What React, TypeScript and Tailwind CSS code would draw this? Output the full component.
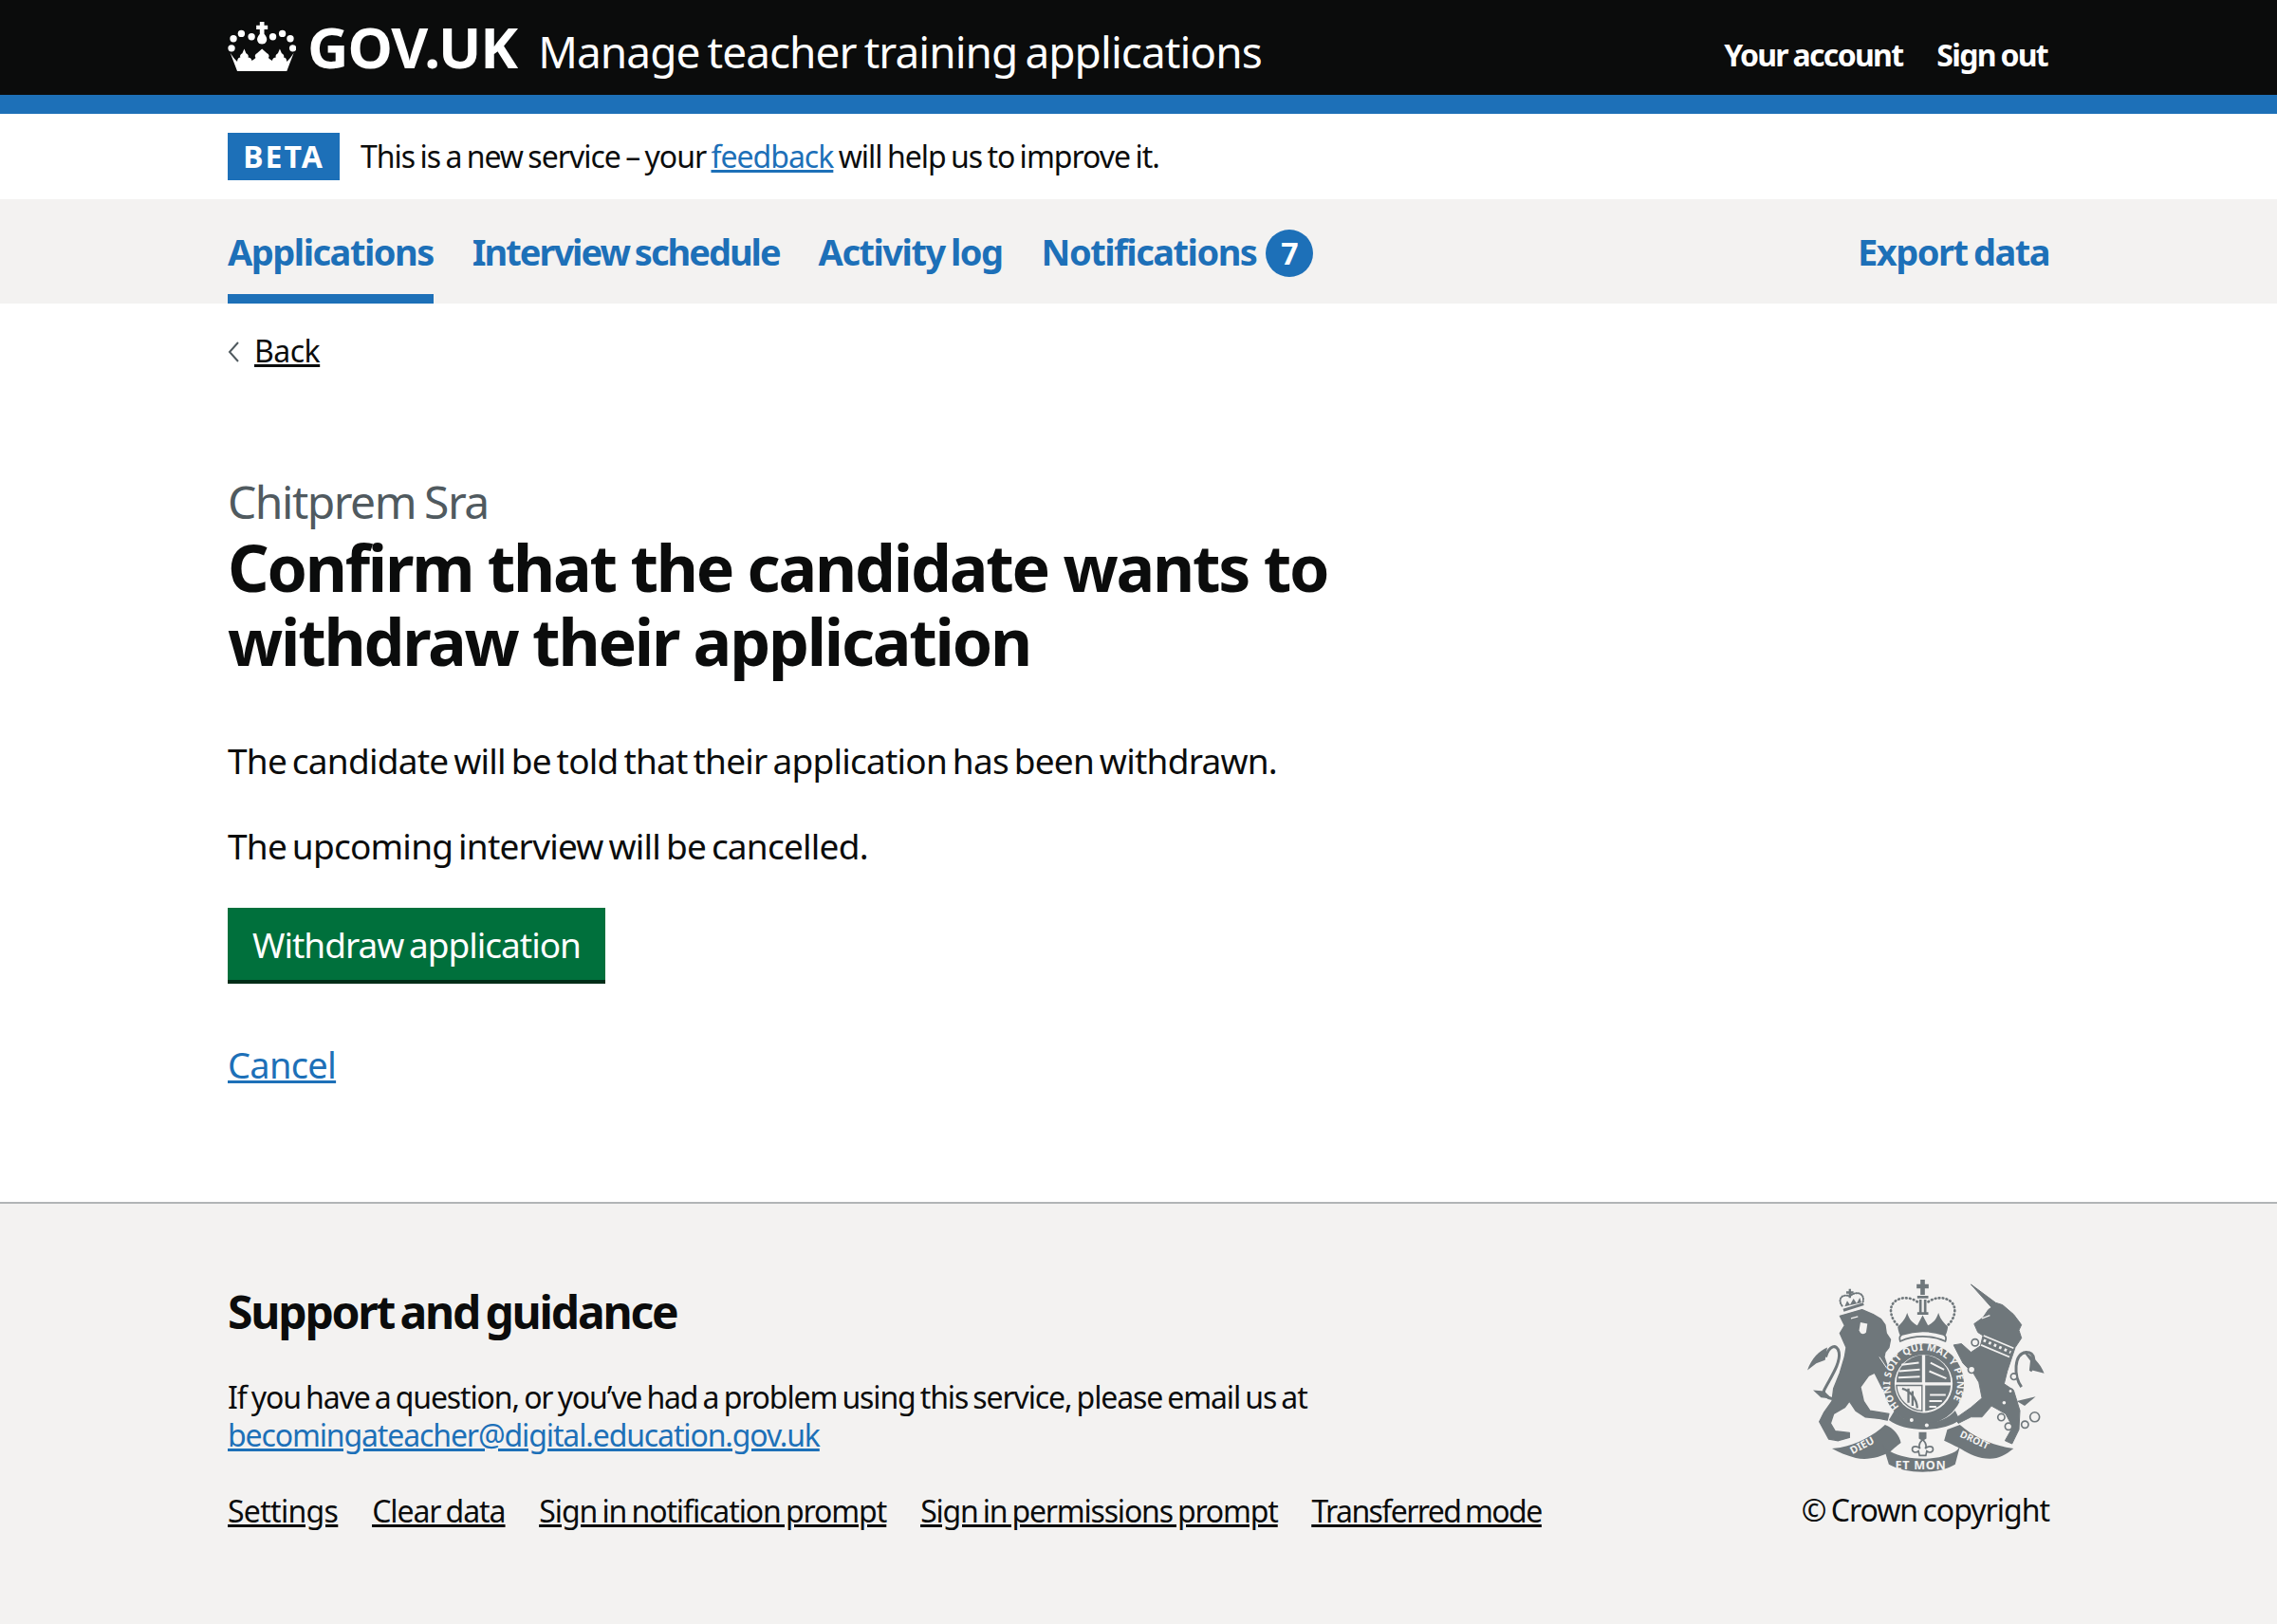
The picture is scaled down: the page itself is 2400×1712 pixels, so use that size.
import React from 'react';

const CrownLogo = () => (
  <svg viewBox="60 65 215 155" className="w-[72px] h-[52px] shrink-0" fill="#fff">
    {[[72, 148], [78, 118], [103, 102], [135, 112], [202, 112], [232, 102], [257, 118], [265, 148]].map(([cx, cy]) => (
      <circle key={`${cx}-${cy}`} cx={cx} cy={cy} r="11" />
    ))}
    <path d="M161 65h14v11h11v13h-11v14c8 10 10 16 7 23-3 7-8 9-14 9s-11-2-14-9c-3-7-1-13 7-23V89h-11V76h11z" />
    <path d="M68 163c8 12 14 20 22 27 0-9 5-13 10-13-3-6 1-11 6-13l6-14 6 14c5 2 9 7 6 13 6 0 10 3 12 10 5-3 9-6 12-9-4-5-2-11 4-14l16-14 16 14c6 3 8 9 4 14 3 3 7 6 12 9 2-7 6-10 12-10-3-6 1-11 6-13l6-14 6 14c5 2 9 7 6 13 5 0 10 4 10 13 8-7 14-15 22-27l-22 57H90z" />
  </svg>
);

const gray = '#6f777b';
const bg = '#f3f2f1';

const Crest = () => (
  <svg viewBox="70 55 755 610" className="w-[252px] h-[203px]" fill={gray}>
    {/* lion */}
    <path stroke={gray} strokeWidth="4" strokeLinejoin="round" d="M175 170L245 150L280 165L305 180L318 198L322 225L335 245L330 270L318 285L315 300L340 375L335 405L310 400L285 350L265 360L240 395L250 440L270 470L330 480L325 500L300 495L255 490L225 470L205 440L190 460L155 480L145 510L160 535L205 540L205 555L170 565L140 560L110 505L125 475L150 440L155 400L175 350L190 300L195 270L175 225L190 200Z" />
    <path d="M130 300C140 265 165 255 172 285C178 320 145 365 125 405C120 420 135 430 150 432" fill="none" stroke={gray} strokeWidth="9" />
    <path d="M72 342C85 305 110 280 135 270L128 310L100 320Z" />
    <path d="M90 405L125 408L150 432L115 428Z" />
    <path d="M240 190L262 195L258 222C250 232 238 226 236 215Z" fill={bg} />
    <path d="M210 178L232 172" stroke={bg} strokeWidth="4" />
    <path d="M300 300L340 360" stroke={bg} strokeWidth="3" />
    {/* lion crown */}
    <path d="M186 152L250 132" stroke={gray} strokeWidth="9" />
    <path d="M182 138C165 115 185 98 207 108C222 90 255 95 248 125" fill="none" stroke={gray} strokeWidth="6" strokeDasharray="3 5" strokeLinecap="round" />
    <path d="M203 84h7v8h8v7h-8v14h-7V99h-8v-7h8z" />
    <path d="M190 140L198 122L207 135L218 115L228 130L238 112L243 128Z" />
    {/* unicorn */}
    <path stroke={gray} strokeWidth="3" strokeLinejoin="round" d="M590 70L668 128L690 135L725 165L750 198L742 215L750 240L730 270L720 300L705 345L695 385L725 405L745 470L742 530L720 575L698 565L722 522L700 480L655 455L625 490L590 490L550 510L540 495L590 460L625 430L615 380L600 355L565 320L535 262L560 258L590 285L620 265L628 232L612 222L600 195L628 175L645 150L655 143Z" />
    <path d="M750 395C725 360 725 290 765 285C795 285 795 320 778 345" fill="none" stroke={gray} strokeWidth="9" />
    <path d="M822 352C810 320 785 295 755 282L778 312L775 340Z" />
    <path d="M735 440L795 425L760 455Z" />
    <path d="M630 232L725 272M622 262L712 300" stroke={bg} strokeWidth="5" />
    <path d="M630 247L716 285" stroke={bg} strokeWidth="9" strokeDasharray="8 10" />
    <path d="M625 178L650 168" stroke={bg} strokeWidth="4" />
    <g fill={bg} stroke={gray} strokeWidth="5">
      <circle cx="603" cy="254" r="11" />
      <circle cx="592" cy="340" r="11" />
      <circle cx="726" cy="362" r="10" />
      <circle cx="715" cy="408" r="7" />
      <circle cx="695" cy="445" r="8" />
    </g>
    <g fill="none" stroke={gray} strokeWidth="5">
      <circle cx="686" cy="491" r="11" />
      <circle cx="709" cy="520" r="11" />
      <circle cx="761" cy="514" r="11" />
      <circle cx="792" cy="490" r="15" />
    </g>
    {/* royal crown */}
    <path d="M430 55h14v14h12v14h-12v20h-14V83h-12V69h12z" />
    <path d="M420 106h35v8h-35zM426 118h8v42h-8zM441 118h8v42h-8zM420 158h35v8h-35z" />
    <path d="M420 125C385 100 330 115 337 160C340 180 352 195 365 205" fill="none" stroke={gray} strokeWidth="8" strokeDasharray="2 10" strokeLinecap="round" />
    <path d="M455 125C490 100 545 115 538 160C535 180 523 195 510 205" fill="none" stroke={gray} strokeWidth="8" strokeDasharray="2 10" strokeLinecap="round" />
    <path d="M358 205C370 190 380 185 388 160C396 185 405 190 420 200L437 168L454 200C470 190 479 185 487 160C495 185 505 190 517 205C515 218 512 228 508 232C465 215 410 215 367 232C363 228 360 218 358 205Z" />
    <path d="M366 250C362 238 364 232 372 229C415 215 460 215 503 229C511 232 513 238 509 250C465 230 410 230 366 250Z" fill={bg} stroke={gray} strokeWidth="5" />
    {/* garter and shield */}
    <circle cx="440" cy="385" r="128" />
    <circle cx="440" cy="385" r="92" fill={bg} />
    <path id="garter" d="M363 458A106 106 0 1 1 517 458" fill="none" />
    <text fontSize="31" fontWeight="700" letterSpacing="1" fill={bg} fontFamily="'Noto Sans', sans-serif">
      <textPath href="#garter">HONI SOIT QUI MAL Y PENSE</textPath>
    </text>
    <path d="M435 380V294A87 87 0 0 0 354 380Z" />
    <path d="M445 380V294A87 87 0 0 1 526 380Z" />
    <path d="M445 390H526A87 87 0 0 1 445 471Z" />
    <path d="M435 390H354A87 87 0 0 0 435 471Z" fill="none" stroke={gray} strokeWidth="4" />
    <path d="M370 325L425 318M362 345L428 340M360 365L428 362M462 318L505 340M458 345L512 368M460 420H510M458 440H498M458 458H480" stroke={bg} strokeWidth="6" fill="none" />
    <path d="M372 400C395 405 418 430 420 462M392 400V445M405 408V455" stroke={gray} strokeWidth="7" fill="none" />
    <path d="M348 470C385 520 495 525 540 470L555 500C500 540 380 540 330 500Z" />
    <circle cx="450" cy="516" r="6" fill={bg} />
    <circle cx="402" cy="500" r="6" fill={bg} />
    {/* motto */}
    <path d="M150 590C215 585 275 555 318 515C345 525 365 550 368 572C345 590 340 595 335 600C300 620 260 627 225 620C195 612 170 602 150 590Z" />
    <path d="M310 575C318 590 325 595 335 600C390 630 485 630 540 600C548 595 552 588 556 580L540 640C490 672 385 672 330 640Z" />
    <path d="M515 530L555 515C600 555 655 580 725 590C700 610 680 622 650 622C615 622 585 608 560 592C540 582 520 572 505 565Z" />
    <text x="215" y="609" fontSize="33" fontWeight="700" fill={bg} transform="rotate(-28 215 609)" fontFamily="'Noto Sans', sans-serif">DIEU</text>
    <text x="350" y="655" fontSize="38" fontWeight="700" letterSpacing="2" fill={bg} fontFamily="'Noto Sans', sans-serif">ET MON</text>
    <text x="553" y="552" fontSize="31" fontWeight="700" fill={bg} transform="rotate(25 553 552)" fontFamily="'Noto Sans', sans-serif">DROIT</text>
    <path d="M437 562C448 572 450 582 445 590C455 580 470 582 470 592C470 602 458 605 450 598L447 612H427L424 598C416 605 404 602 404 592C404 582 419 580 429 590C424 582 426 572 437 562Z" fill={bg} stroke={gray} strokeWidth="5" />
    <path d="M425 538H449V558L437 566L425 558Z" />
  </svg>
);

const footerLinks = [
  { label: 'Settings', className: 'tracking-[-0.7px]' },
  { label: 'Clear data', className: 'tracking-[-1.1px]' },
  { label: 'Sign in notification prompt', className: 'tracking-[-1.1px]' },
  { label: 'Sign in permissions prompt', className: 'tracking-[-1.2px]' },
  { label: 'Transferred mode', className: 'tracking-[-1.6px]' },
];

export default function App() {
  return (
    <div className="font-['Noto_Sans',sans-serif] text-[#0b0c0c] bg-white min-h-[1712px] flex flex-col">
      <header className="bg-[#0b0c0c] text-white h-[120px] border-b-[20px] border-[#1d70b8] px-[240px] flex items-center justify-between">
        <div className="flex items-baseline mb-[3px]">
          <span className="self-center">
            <CrownLogo />
          </span>
          <span className="ml-[12px] text-[60px] leading-none font-bold tracking-[-1px]">GOV.UK</span>
          <span className="ml-[22px] text-[46px] leading-none tracking-[-0.95px] [word-spacing:-3px]">Manage teacher training applications</span>
        </div>
        <nav className="flex gap-[36px] text-[32px] font-bold tracking-[-1.7px] [word-spacing:-1px] mt-[16px] mr-[2px]">
          <a>Your account</a>
          <a>Sign out</a>
        </nav>
      </header>

      <div className="h-[90px] px-[240px] flex items-center">
        <strong className="bg-[#1d70b8] text-white w-[118px] h-[50px] flex items-center justify-center text-[32px] font-bold tracking-[2px]">BETA</strong>
        <p className="ml-[22px] text-[32px] tracking-[-1px] [word-spacing:-2px]">
          This is a new service – your <a className="text-[#1d70b8] underline">feedback</a> will help us to improve it.
        </p>
      </div>

      <nav className="h-[110px] bg-[#f3f2f1] px-[240px] flex justify-between text-[38px] font-bold text-[#1d70b8] tracking-[-1.5px] [word-spacing:-2px]">
        <div className="flex gap-[41px]">
          <a className="h-full border-b-[10px] border-[#1d70b8] pt-[30px] leading-[50px]">Applications</a>
          <a className="pt-[30px] leading-[50px] tracking-[-2px]">Interview schedule</a>
          <a className="pt-[30px] leading-[50px]">Activity log</a>
          <a className="pt-[30px] leading-[50px] flex items-start">
            Notifications
            <span className="ml-[10px] mt-[2px] w-[50px] h-[50px] rounded-full bg-[#1d70b8] text-white flex items-center justify-center text-[32px] tracking-normal">7</span>
          </a>
        </div>
        <a className="pt-[30px] leading-[50px]">Export data</a>
      </nav>

      <main className="px-[240px] flex-1">
        <a className="mt-[30px] flex items-center text-[32px] leading-[40px] tracking-[-0.5px]">
          <svg viewBox="0 0 12 22" className="w-[12px] h-[22px] mr-[16px] mt-[2px]" fill="none" stroke="#505a5f" strokeWidth="2">
            <path d="M11 1L2 11l9 10" />
          </svg>
          <span className="underline">Back</span>
        </a>
        <p className="mt-[109px] text-[48px] leading-[60px] text-[#505a5f] tracking-[-1.5px] [word-spacing:-2px]">Chitprem Sra</p>
        <h1 className="mt-0 text-[68px] leading-[78px] font-bold tracking-[-2.2px] w-[1240px]">
          Confirm that the candidate wants to withdraw their application
        </h1>
        <p className="mt-[62px] text-[37px] leading-[50px] tracking-[-0.77px] [word-spacing:-3px]">The candidate will be told that their application has been withdrawn.</p>
        <p className="mt-[40px] text-[37px] leading-[50px] tracking-[-0.77px] [word-spacing:-3px]">The upcoming interview will be cancelled.</p>
        <button className="mt-[40px] block bg-[#00703c] text-white border-b-[4px] border-[#002d18] h-[80px] w-[398px] text-[37px] tracking-[-1px] [word-spacing:-3px] leading-none">Withdraw application</button>
        <a className="mt-[60px] block text-[38px] leading-[50px] text-[#1d70b8] underline tracking-[-0.7px]">Cancel</a>
      </main>

      <footer className="h-[445px] bg-[#f3f2f1] border-t-2 border-[#b1b4b6] px-[240px] flex justify-between">
        <div>
          <h2 className="mt-[84px] text-[48px] leading-[60px] font-bold tracking-[-2.2px] [word-spacing:-4px]">Support and guidance</h2>
          <p className="mt-[40px] text-[32px] leading-[40px] tracking-[-1.13px] [word-spacing:-2px]">
            If you have a question, or you’ve had a problem using this service, please email us at
            <br />
            <a className="text-[#1d70b8] underline">becomingateacher@digital.education.gov.uk</a>
          </p>
          <div className="mt-[40px] flex gap-[36px] text-[32px] leading-[40px] underline [word-spacing:-2px]">
            {footerLinks.map((link) => (
              <a key={link.label} className={link.className}>{link.label}</a>
            ))}
          </div>
        </div>
        <div className="flex flex-col items-end">
          <div className="mt-[80px] mr-[4px]">
            <Crest />
          </div>
          <p className="mt-[20px] text-[32px] leading-[40px] tracking-[-1px] [word-spacing:-2px]">© Crown copyright</p>
        </div>
      </footer>
    </div>
  );
}
